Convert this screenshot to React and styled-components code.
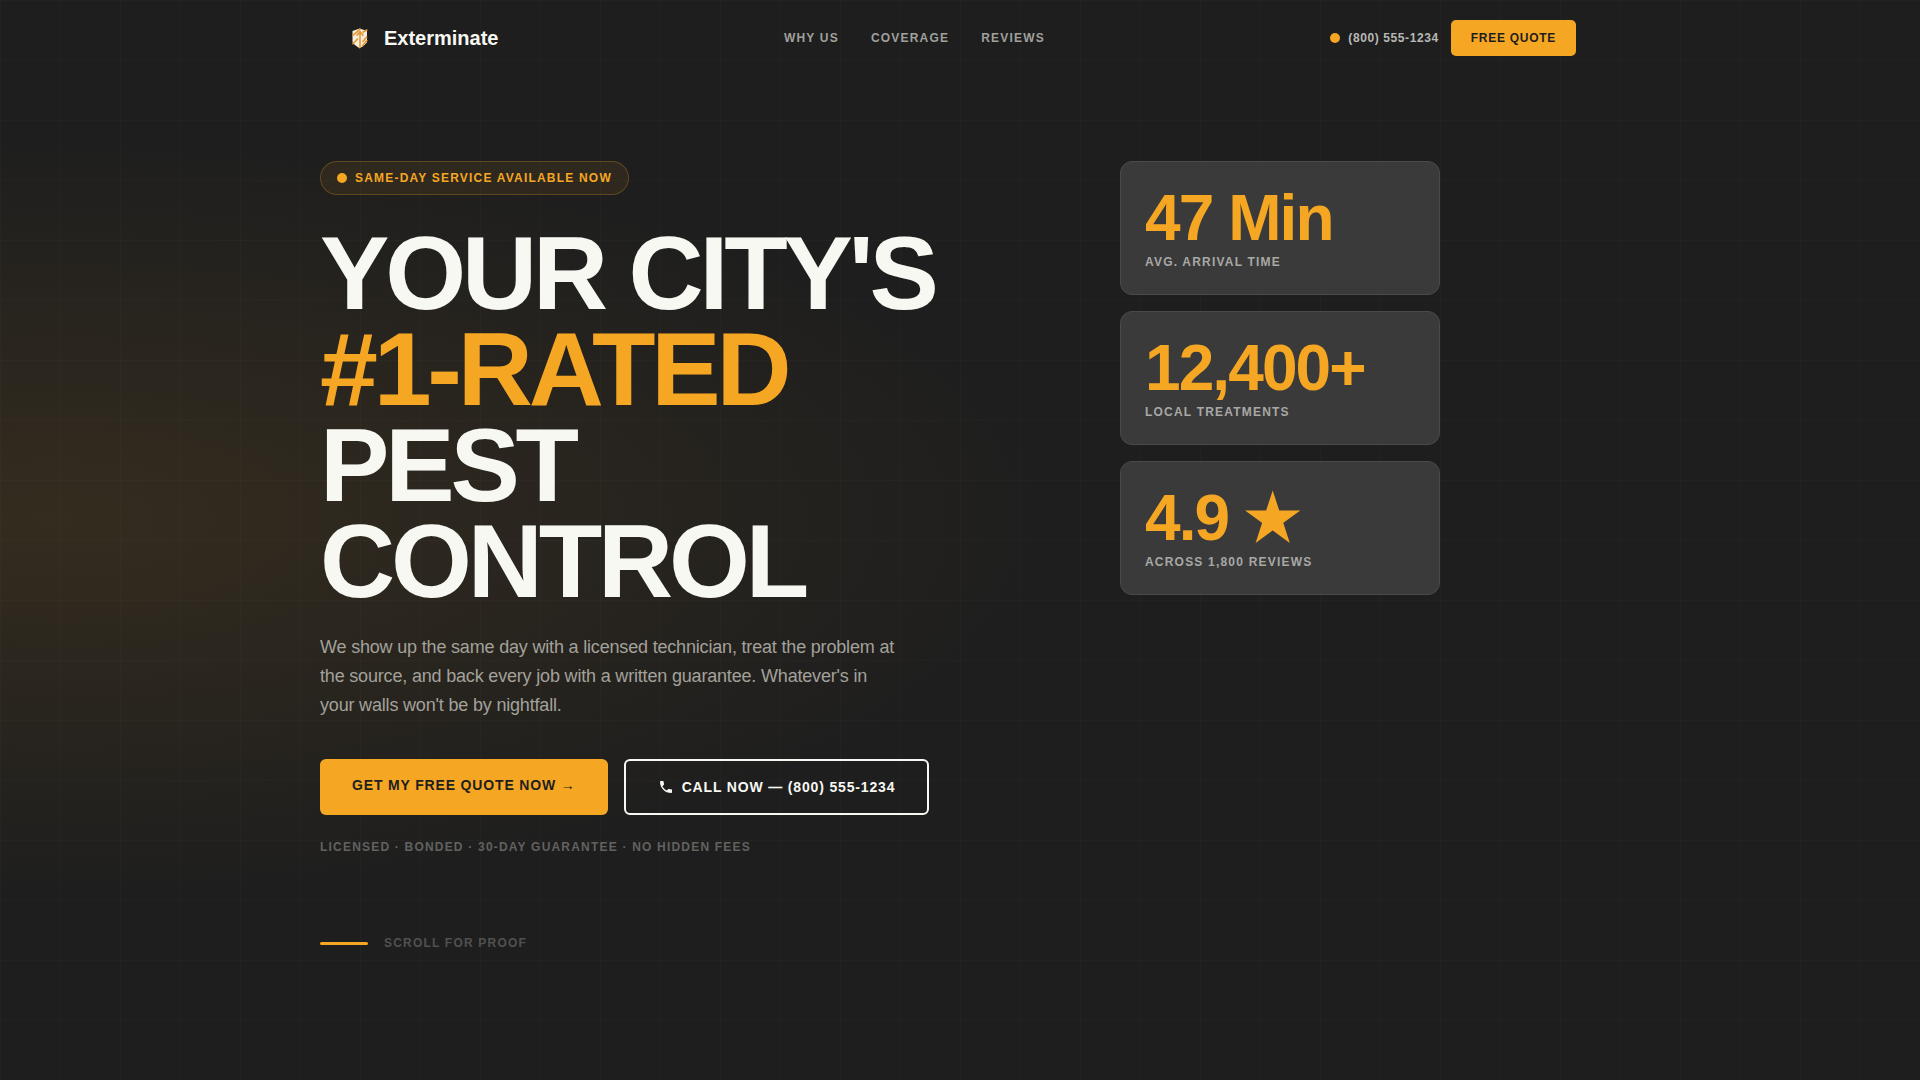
/* eslint-disable react/prop-types */
import styled, { createGlobalStyle } from "styled-components";

const GlobalStyle = createGlobalStyle`
  :root {
    --color-amber: #f5a623;
    --color-ink: #1e1e1e;
    --color-card: #3a3a3a;
    --color-paper: #f8f8f3;
  }

  *,
  *::before,
  *::after {
    box-sizing: border-box;
    margin: 0;
    padding: 0;
  }

  body {
    background-color: var(--color-ink);
    color: var(--color-paper);
    font-family: "Liberation Sans", Arial, sans-serif;
    font-size: 16px;
    line-height: 24px;
  }

  a {
    color: inherit;
    text-decoration: none;
  }
`;

const Page = styled.div`
  min-height: 100vh;
  background-image: radial-gradient(
      ellipse 52% 35% at 3% 48%,
      rgba(245, 166, 35, 0.1),
      transparent
    ),
    linear-gradient(rgba(255, 255, 255, 0.02) 1px, transparent 1px),
    linear-gradient(90deg, rgba(255, 255, 255, 0.02) 1px, transparent 1px);
  background-size: 100% 100%, 60px 60px, 60px 60px;
`;

const Header = styled.header`
  max-width: 1280px;
  margin: 0 auto;
  padding: 20px 24px;
  border-bottom: 1px solid transparent;
  display: flex;
  align-items: center;
  justify-content: space-between;
`;

const Logo = styled.a`
  display: flex;
  align-items: center;
  gap: 8px;
  font-size: 20px;
  font-weight: 700;
`;

const Nav = styled.nav`
  display: flex;
  gap: 32px;
  color: #a0a09c;
  font-size: 12px;
  font-weight: 700;
  letter-spacing: 0.1em;
  text-transform: uppercase;

  @media (max-width: 800px) {
    display: none;
  }
`;

const HeaderActions = styled.div`
  display: flex;
  align-items: center;
  gap: 12px;
`;

const PhoneLink = styled.a`
  display: flex;
  align-items: center;
  gap: 8px;
  color: #b8b8b5;
  font-size: 12px;
  font-weight: 700;
  letter-spacing: 0.05em;
`;

const Dot = styled.span`
  width: 10px;
  height: 10px;
  border-radius: 50%;
  background-color: var(--color-amber);
`;

const QuoteButton = styled.button`
  height: 36px;
  padding: 0 20px;
  border: none;
  border-radius: 5px;
  background-color: var(--color-amber);
  color: var(--color-ink);
  font-family: inherit;
  font-size: 12px;
  font-weight: 700;
  letter-spacing: 0.06em;
  text-transform: uppercase;
  cursor: pointer;
`;

const Hero = styled.main`
  max-width: 1280px;
  margin: 0 auto;
  padding: 84px 0 120px;
  display: grid;
  grid-template-columns: 3fr 2fr;
  column-gap: 80px;
  align-items: start;

  @media (max-width: 1300px) {
    padding: 84px 24px 120px;
  }

  @media (max-width: 1000px) {
    grid-template-columns: 1fr;
    row-gap: 48px;
  }
`;

const Badge = styled.p`
  width: fit-content;
  height: 34px;
  padding: 0 16px;
  margin-bottom: 30px;
  display: flex;
  align-items: center;
  gap: 8px;
  border: 1px solid rgba(245, 166, 35, 0.25);
  border-radius: 17px;
  background-color: rgba(245, 166, 35, 0.08);
  color: var(--color-amber);
  font-size: 12px;
  font-weight: 700;
  letter-spacing: 0.1em;
  text-transform: uppercase;
`;

const Title = styled.h1`
  font-size: 104px;
  font-weight: 700;
  line-height: 96px;
  letter-spacing: -0.04em;
  text-transform: uppercase;
`;

const Highlight = styled.span`
  display: block;
  color: var(--color-amber);
`;

const Lead = styled.p`
  max-width: 580px;
  margin: 24px 0 39px;
  color: #a3a19b;
  font-size: 18px;
  line-height: 29px;
  letter-spacing: -0.01em;
`;

const Actions = styled.div`
  display: flex;
  flex-wrap: wrap;
  gap: 16px;
`;

const Button = styled.a`
  padding: ${(props) => (props.$outline ? "16px 32px" : "16px 32px 20px")};
  display: flex;
  align-items: center;
  gap: 8px;
  border: ${(props) =>
    props.$outline ? "2px solid var(--color-paper)" : "none"};
  border-radius: 6px;
  background-color: ${(props) =>
    props.$outline ? "transparent" : "var(--color-amber)"};
  color: ${(props) =>
    props.$outline ? "var(--color-paper)" : "var(--color-ink)"};
  font-size: 14px;
  font-weight: 700;
  line-height: 20px;
  letter-spacing: 0.06em;
  text-transform: uppercase;
`;

const FinePrint = styled.p`
  margin-top: 20px;
  color: #626260;
  font-size: 12px;
  font-weight: 700;
  letter-spacing: 0.1em;
  text-transform: uppercase;
`;

const ScrollHint = styled.a`
  width: fit-content;
  margin-top: 72px;
  display: flex;
  align-items: center;
  gap: 16px;
  color: #515150;
  font-size: 12px;
  font-weight: 700;
  letter-spacing: 0.1em;
  text-transform: uppercase;

  &::before {
    content: "";
    width: 48px;
    height: 3px;
    border-radius: 2px;
    background-color: var(--color-amber);
  }
`;

const Stats = styled.ul`
  width: 100%;
  max-width: 320px;
  display: grid;
  gap: 16px;
  list-style: none;
`;

const StatCard = styled.li`
  padding: 24px;
  border: 1px solid #4a4a4a;
  border-radius: 12px;
  background-color: var(--color-card);
`;

const StatValue = styled.p`
  color: var(--color-amber);
  font-size: 64px;
  font-weight: 700;
  line-height: 64px;
  letter-spacing: -0.03em;
  white-space: nowrap;
`;

const StatLabel = styled.p`
  margin-top: 4px;
  color: #a8a8a6;
  font-size: 12px;
  font-weight: 700;
  line-height: 16px;
  letter-spacing: 0.1em;
  text-transform: uppercase;
`;

const links = [
  { href: "#why", label: "Why us" },
  { href: "#coverage", label: "Coverage" },
  { href: "#reviews", label: "Reviews" },
];

const stats = [
  { value: "47 Min", label: "Avg. arrival time" },
  { value: "12,400+", label: "Local treatments" },
  { value: "4.9 ★", label: "Across 1,800 reviews" },
];

function ShieldIcon() {
  return (
    <svg width="32" height="32" viewBox="0 0 32 32" aria-hidden="true">
      <path
        d="M15.7 6.5 23 9v11c0 1.500-4.300 4-7.300 6.500C12.700 24 8.500 21.500 8.500 20V9z"
        fill="#f7efdd"
      />
      <g stroke="#e5973a" strokeWidth="1.6" fill="none">
        <path d="M16 26V10M12.600 13.600 16 9.800l3.400 3.800" />
        <path d="M8.200 13.800 16.500 6.800" />
        <path d="M18.500 10.500 23.300 7.800" />
        <path d="M8.500 22.200 14 16.500" />
        <path d="M18 24.500 23.300 18" />
        <path d="M18.500 20 23 14.500" />
      </g>
    </svg>
  );
}

function PhoneIcon() {
  return (
    <svg
      width="16"
      height="16"
      viewBox="0 0 24 24"
      fill="currentColor"
      aria-hidden="true"
    >
      <path d="M6.620 10.790c1.440 2.830 3.760 5.140 6.590 6.590l2.200-2.200c.27-.27.67-.36 1.020-.24 1.120.37 2.330.57 3.570.57.55 0 1 .45 1 1V20c0 .55-.45 1-1 1-9.390 0-17-7.610-17-17 0-.55.45-1 1-1h3.500c.55 0 1 .45 1 1 0 1.250.2 2.450.57 3.570.11.35.03.74-.25 1.020l-2.200 2.200z" />
    </svg>
  );
}

function App() {
  return (
    <>
      <GlobalStyle />
      <Page>
        <Header>
          <Logo href="#top">
            <ShieldIcon />
            Exterminate
          </Logo>
          <Nav>
            {links.map((link) => (
              <a key={link.href} href={link.href}>
                {link.label}
              </a>
            ))}
          </Nav>
          <HeaderActions>
            <PhoneLink href="tel:8005551234">
              <Dot />
              (800) 555-1234
            </PhoneLink>
            <QuoteButton type="button">Free quote</QuoteButton>
          </HeaderActions>
        </Header>

        <Hero id="top">
          <div>
            <Badge>
              <Dot />
              Same-day service available now
            </Badge>
            <Title>
              Your city&apos;s
              <Highlight>#1-rated</Highlight>
              Pest control
            </Title>
            <Lead>
              We show up the same day with a licensed technician, treat the
              problem at the source, and back every job with a written
              guarantee. Whatever&apos;s in your walls won&apos;t be by
              nightfall.
            </Lead>
            <Actions>
              <Button href="#quote">Get my free quote now →</Button>
              <Button href="tel:8005551234" $outline>
                <PhoneIcon />
                Call now — (800) 555-1234
              </Button>
            </Actions>
            <FinePrint>
              Licensed · Bonded · 30-day guarantee · No hidden fees
            </FinePrint>
            <ScrollHint href="#reviews">Scroll for proof</ScrollHint>
          </div>

          <Stats>
            {stats.map((stat) => (
              <StatCard key={stat.label}>
                <StatValue>{stat.value}</StatValue>
                <StatLabel>{stat.label}</StatLabel>
              </StatCard>
            ))}
          </Stats>
        </Hero>
      </Page>
    </>
  );
}

export default App;
